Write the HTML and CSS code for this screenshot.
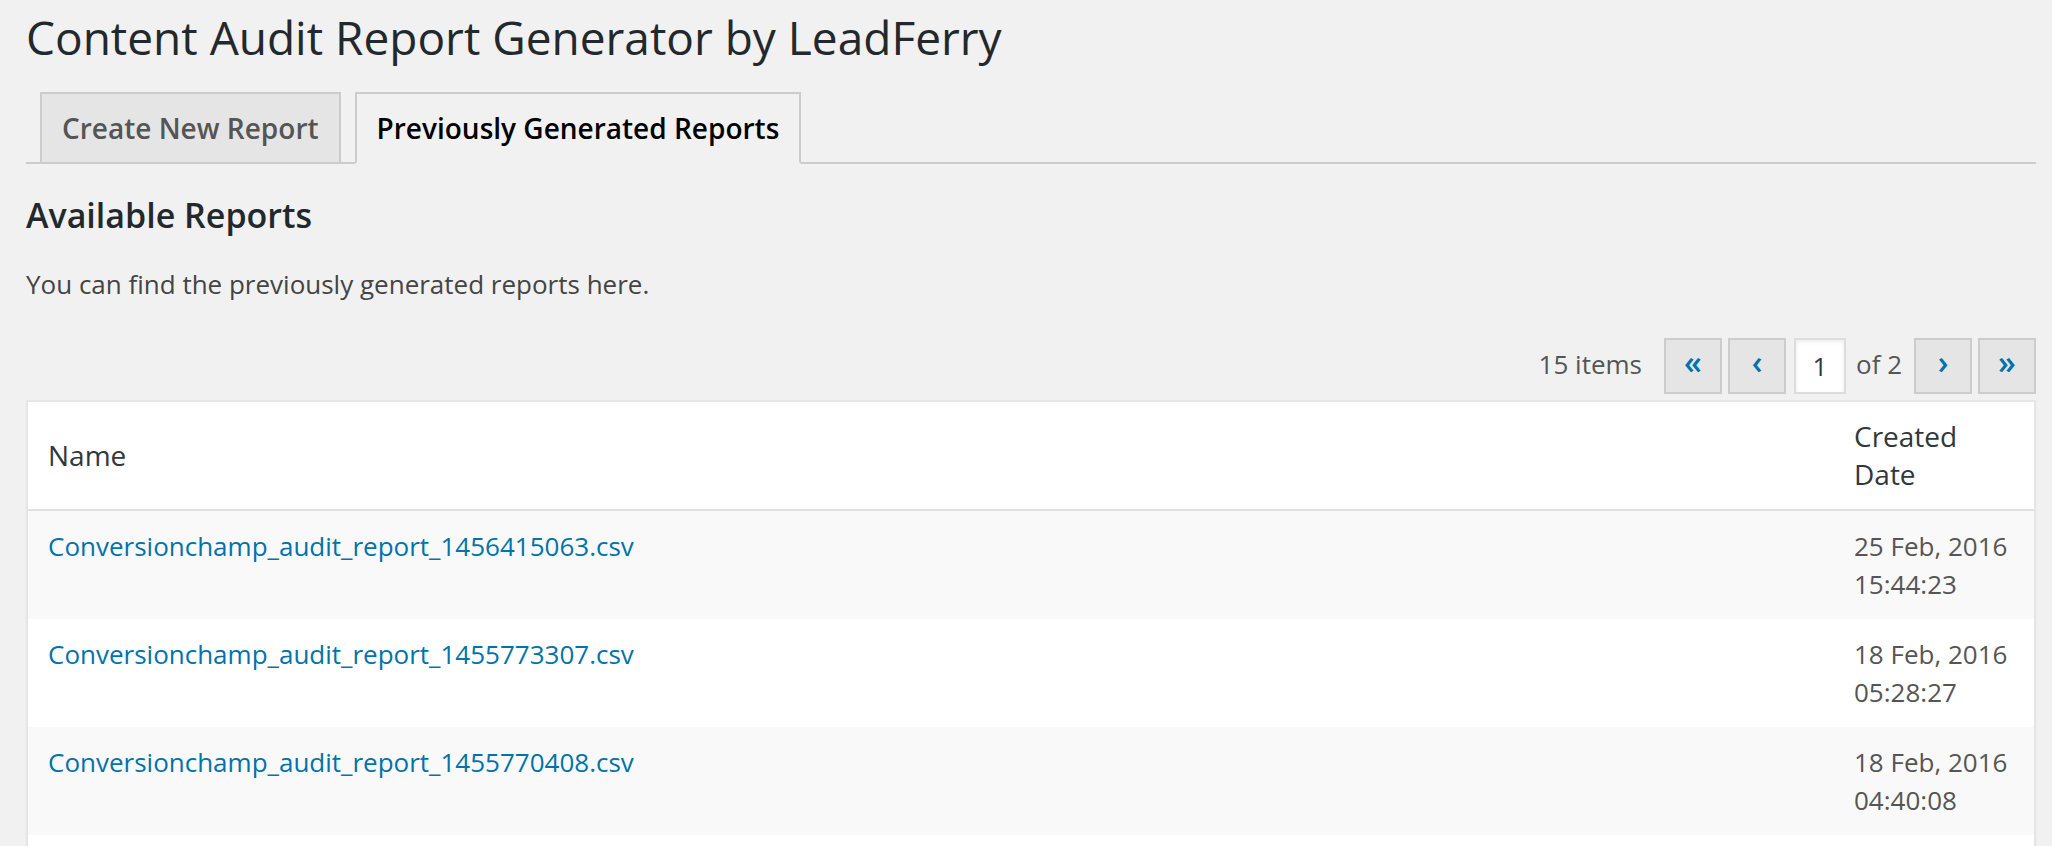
FILE: index.html
```html
<!DOCTYPE html>
<html lang="en">
<head>
<meta charset="utf-8">
<title>Content Audit Report Generator by LeadFerry</title>
<link rel="stylesheet" href="styles.css">
</head>
<body>
<div class="wrap">
  <h1 class="page-title">Content Audit Report Generator by LeadFerry</h1>
  <nav class="nav-tab-wrapper">
    <a class="nav-tab" href="#">Create New Report</a>
    <a class="nav-tab nav-tab-active" href="#">Previously Generated Reports</a>
  </nav>
  <h2 class="section-title">Available Reports</h2>
  <p class="intro">You can find the previously generated reports here.</p>
  <div class="tablenav">
    <span class="displaying-num">15 items</span>
    <a class="page-btn first" href="#">&laquo;</a>
    <a class="page-btn prev" href="#">&lsaquo;</a>
    <input class="current-page" type="text" value="1" size="1">
    <span class="total-pages">of 2</span>
    <a class="page-btn next" href="#">&rsaquo;</a>
    <a class="page-btn last" href="#">&raquo;</a>
  </div>
  <table class="reports">
    <colgroup>
      <col class="col-name">
      <col class="col-date">
    </colgroup>
    <thead>
      <tr>
        <th class="th-name">Name</th>
        <th class="th-date">Created Date</th>
      </tr>
    </thead>
    <tbody>
      <tr>
        <td><a href="#">Conversionchamp_audit_report_1456415063.csv</a></td>
        <td class="date">25 Feb, 2016 15:44:23</td>
      </tr>
      <tr>
        <td><a href="#">Conversionchamp_audit_report_1455773307.csv</a></td>
        <td class="date">18 Feb, 2016 05:28:27</td>
      </tr>
      <tr>
        <td><a href="#">Conversionchamp_audit_report_1455770408.csv</a></td>
        <td class="date">18 Feb, 2016 04:40:08</td>
      </tr>
      <tr class="more-row">
        <td></td>
        <td class="date"></td>
      </tr>
    </tbody>
  </table>
</div>
</body>
</html>
```
FILE: styles.css
```css
html, body {
  margin: 0;
  padding: 0;
  background: #f1f1f1;
}

body {
  font-family: "Open Sans", "Liberation Sans", sans-serif;
  color: #444;
  font-size: 26px;
}

.wrap {
  padding: 8px 16px 0 26px;
}

.page-title {
  margin: 0;
  font-size: 46px;
  font-weight: 400;
  line-height: 58px;
  color: #23282d;
}

.nav-tab-wrapper {
  display: flex;
  align-items: flex-start;
  margin-top: 26px;
  border-bottom: 2px solid #ccc;
}

.nav-tab {
  margin-left: 14px;
  padding: 10px 20px;
  border: 2px solid #ccc;
  border-bottom: none;
  background: #e5e5e5;
  color: #555;
  font-size: 28px;
  line-height: 48px;
  font-weight: 600;
  text-decoration: none;
  white-space: nowrap;
}

.nav-tab-active {
  background: #f1f1f1;
  color: #000;
  border-bottom: 2px solid #f1f1f1;
  margin-bottom: -2px;
}

.section-title {
  margin: 28px 0 0;
  font-size: 34px;
  line-height: 47px;
  font-weight: 600;
  color: #23282d;
}

.intro {
  margin: 26px 0 0;
  font-size: 26px;
  line-height: 39px;
  color: #444;
}

.tablenav {
  display: flex;
  justify-content: flex-end;
  align-items: center;
  margin-top: 34px;
  height: 56px;
}

.displaying-num,
.total-pages {
  font-size: 26px;
  line-height: 39px;
  padding-bottom: 4px;
  color: #555;
}

.displaying-num {
  margin-right: 22px;
}

.page-btn {
  box-sizing: border-box;
  display: block;
  width: 58px;
  height: 56px;
  padding: 6px 10px 14px;
  border: 2px solid #ccc;
  background: #e5e5e5;
  color: #0073aa;
  font-size: 32px;
  line-height: 32px;
  font-weight: 600;
  text-align: center;
  text-decoration: none;
}

.prev {
  margin-left: 6px;
}

.current-page {
  box-sizing: border-box;
  width: 52px;
  height: 56px;
  margin: 0 0 0 8px;
  padding: 0;
  border: 2px solid #ddd;
  background: #fff;
  box-shadow: inset 0 2px 4px rgba(0, 0, 0, 0.07);
  color: #32373c;
  font-family: "Open Sans", "Liberation Sans", sans-serif;
  font-size: 26px;
  text-align: center;
  outline: none;
}

.total-pages {
  margin-left: 10px;
  margin-right: 12px;
}

.last {
  margin-left: 6px;
}

.reports {
  width: 100%;
  margin-top: 6px;
  border: 2px solid #e5e5e5;
  border-spacing: 0;
  table-layout: fixed;
  background: #fff;
  box-shadow: 0 2px 2px rgba(0, 0, 0, 0.04);
}

.col-date {
  width: 200px;
}

.reports th {
  padding: 16px 20px;
  font-size: 28px;
  line-height: 37.7px;
  font-weight: 400;
  color: #32373c;
  text-align: left;
  vertical-align: middle;
  border-bottom: 2px solid #e1e1e1;
}

.reports td {
  padding: 16px 20px;
  font-size: 26px;
  line-height: 38px;
  vertical-align: top;
  color: #555;
}

.reports tbody tr:nth-child(odd) {
  background: #f9f9f9;
}

.reports tr.more-row td {
  height: 76px;
}

.reports td a {
  color: #0073aa;
  text-decoration: none;
}

.reports td.date {
  color: #555;
}
```
